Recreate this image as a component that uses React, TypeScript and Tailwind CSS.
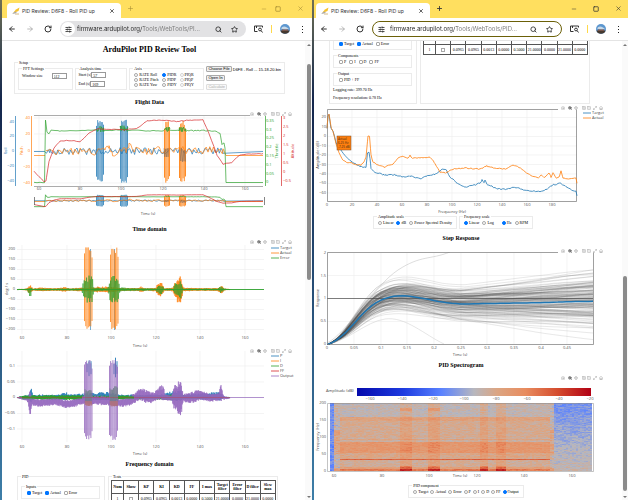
import type { ReactNode } from 'react';
import {
  ArrowLeft,
  ArrowRight,
  Camera,
  House,
  Maximize2,
  Minus,
  Move,
  Plus,
  RotateCw,
  Search,
  SlidersHorizontal,
  Square,
  SquareMinus,
  SquarePlus,
  Star,
  X,
  ZoomIn,
} from 'lucide-react';

type Point = [number, number];

const BLUE = '#1f77b4';
const ORANGE = '#ff7f0e';
const GREEN = '#2ca02c';
const RED = '#d62728';
const PURPLE = '#9467bd';

/* ---------- Data helpers ---------- */

const makeRandom = (seed: number) => {
  let s = seed;
  return () => {
    s = (s + 0x6d2b79f5) | 0;
    let t = Math.imul(s ^ (s >>> 15), 1 | s);
    t = (t + Math.imul(t ^ (t >>> 7), 61 | t)) ^ t;
    return ((t ^ (t >>> 14)) >>> 0) / 4294967296;
  };
};

const toPath = (points: Point[]) =>
  points.map(([x, y], i) => `${i ? 'L' : 'M'}${x.toFixed(1)} ${y.toFixed(1)}`).join('');

const lerpAt = (points: Point[], x: number) => {
  if (x <= points[0][0]) return points[0][1];
  for (let i = 1; i < points.length; i++) {
    const [x1, y1] = points[i];
    if (x <= x1) {
      const [x0, y0] = points[i - 1];
      return y0 + ((x - x0) / (x1 - x0 || 1)) * (y1 - y0);
    }
  }
  return points[points.length - 1][1];
};

// Adds small noise along a hand-placed curve
const jitter = (points: Point[], amp: number, seed: number, step = 1.5) => {
  const rnd = makeRandom(seed);
  const out: Point[] = [];
  const xs = new Set(points.map((p) => p[0]));
  for (let x = points[0][0]; x < points[points.length - 1][0]; x += step) xs.add(x);
  [...xs].sort((a, b) => a - b).forEach((x) => out.push([x, lerpAt(points, x) + (rnd() - 0.5) * amp]));
  return toPath(out);
};

// Signal that swings between a centre and an envelope
const swing = (centre: Point[], up: Point[], down: Point[], seed: number, step = 0.4) => {
  const rnd = makeRandom(seed);
  const out: Point[] = [];
  let side = 1;
  for (let x = centre[0][0]; x <= centre[centre.length - 1][0]; x += step) {
    const c = lerpAt(centre, x);
    const k = 0.55 + rnd() * 0.45;
    out.push([x, side > 0 ? c - lerpAt(up, x) * k : c + lerpAt(down, x) * k]);
    side = -side;
  }
  return toPath(out);
};

// Separate up and down strokes of a strong oscillation
const burst = (x0: number, x1: number, top: number, bottom: number, count: number, seed: number, slack = 4) => {
  const rnd = makeRandom(seed);
  const out: string[] = [];
  const step = (x1 - x0) / (count - 1);
  for (let i = 0; i < count; i++) {
    const edge = i === 0 || i === count - 1 ? slack : 0;
    out.push(`M${(x0 + i * step).toFixed(1)} ${(top + edge + rnd() * slack).toFixed(1)}V${(bottom - edge - rnd() * slack).toFixed(1)}`);
  }
  return out.join('');
};

/* ---------- Chart parts ---------- */

interface TickProps {
  items: [string, number][];
  at: number;
  axis: 'x' | 'y';
  anchor?: 'start' | 'middle' | 'end';
  fill?: string;
}

const Ticks = ({ items, at, axis, anchor = 'middle', fill = '#555' }: TickProps) => (
  <g fill={fill} textAnchor={anchor}>
    {items.map(([label, pos]) => (
      <text key={label} x={axis === 'x' ? pos : at} y={axis === 'x' ? at : pos + 1}>
        {label}
      </text>
    ))}
  </g>
);

const VLabel = ({ x, y, fill = '#444', children }: { x: number; y: number; fill?: string; children: ReactNode }) => (
  <text transform={`translate(${x} ${y}) rotate(-90)`} textAnchor="middle" fill={fill}>
    {children}
  </text>
);

const Grid = ({ xs, ys, box }: { xs: number[]; ys: number[]; box: [number, number, number, number] }) => (
  <path
    d={
      xs.map((x) => `M${x} ${box[1]}V${box[3]}`).join('') + ys.map((y) => `M${box[0]} ${y}H${box[2]}`).join('')
    }
    stroke="#ececec"
    strokeWidth="0.6"
    fill="none"
  />
);

const ModeBar = ({ x, y }: { x: number; y: number }) => {
  const icons = [
    { Icon: Camera, dx: 0 },
    { Icon: ZoomIn, dx: 7 },
    { Icon: Move, dx: 13 },
    { Icon: SquarePlus, dx: 21 },
    { Icon: SquareMinus, dx: 26 },
    { Icon: Maximize2, dx: 32 },
    { Icon: House, dx: 38 },
  ];
  return (
    <g>
      {icons.map(({ Icon, dx }, i) => (
        <Icon key={dx} x={x + dx} y={y} size={4} color={i === 1 ? '#555' : '#aaa'} strokeWidth={i === 1 ? 4 : 3} />
      ))}
    </g>
  );
};

const Legend = ({ x, y, items, step = 5 }: { x: number; y: number; items: [string, string][]; step?: number }) => (
  <g>
    {items.map(([label, color], i) => (
      <g key={label}>
        <path d={`M${x} ${y + i * step}h8`} stroke={color} strokeWidth="0.8" />
        <text x={x + 9} y={y + i * step + 1} fill="#444">
          {label}
        </text>
      </g>
    ))}
  </g>
);

const Chart = ({ viewBox, label, children }: { viewBox: string; label: string; children: ReactNode }) => (
  <svg
    viewBox={viewBox}
    role="img"
    aria-label={label}
    className="block w-full font-['Open_Sans',sans-serif] text-[4px]"
  >
    {children}
  </svg>
);

/* ---------- Flight data ---------- */

const rollPath =
  'M34 153.500L45 153.500' + jitter([[45, 153], [50, 154], [96, 153], [164, 153], [223, 153]], 7, 5, 1.6) + 'L263 153.500';
const pitchPath =
  'M34 157.500L45 157.500' +
  jitter([[46, 153], [96, 154], [105, 151], [109, 147], [112, 155], [126, 153], [129, 147], [136, 153], [180, 152], [223, 153]], 8, 21, 1.8) +
  'L226 157.500L263 157.500';
const throttlePath =
  jitter([[34, 184.5], [44.5, 184.5], [45.5, 122], [47, 134], [49, 136], [51, 132], [60, 133], [97, 132]], 0.6, 9, 3) +
  jitter([[97, 131], [104, 131]], 6, 10, 0.4) +
  jitter([[104, 132.5], [120, 132]], 1, 11, 2) +
  jitter([[120, 130.5], [128, 130.5]], 6, 12, 0.4) +
  jitter([[128, 132.5], [164, 133]], 1, 13, 2) +
  jitter([[164, 131.5], [170, 131.5]], 5, 14, 0.4) +
  jitter([[170, 132.5], [179, 132.5]], 1, 15, 2) +
  jitter([[179, 131.5], [186, 131.5]], 5, 16, 0.4) +
  jitter([[186, 133], [200, 132.5], [216, 133], [220, 136], [222, 146], [224, 145], [225, 150]], 1.6, 17, 1.5) +
  'L226 184.500L263 184.500';
const altitudePath = jitter(
  [[34, 173], [44, 184], [46, 183], [49, 163], [54, 150], [60, 143], [72, 142.5], [80, 143.5], [88, 136], [97, 131], [108, 131], [126, 132], [137, 130], [142, 127], [147, 122.5], [163, 122], [177, 123.5], [190, 122], [203, 122], [208, 133], [217, 157], [223, 166], [231, 165], [240, 157], [252, 156], [263, 155.5]],
  0.9,
  31,
  2.5,
);

const FlightLines = () => (
  <g fill="none" strokeWidth="0.7" strokeLinejoin="round">
    <path d={rollPath} stroke={BLUE} vectorEffect="non-scaling-stroke" />
    <path d={burst(96.5, 103.5, 121, 184, 7, 2) + burst(120.5, 127.5, 121, 185, 7, 3)} stroke={BLUE} strokeWidth="0.8" vectorEffect="non-scaling-stroke" />
    <path d={pitchPath} stroke={ORANGE} vectorEffect="non-scaling-stroke" />
    <path d={burst(164.5, 169.5, 123, 185, 5, 4) + burst(179.5, 185.5, 123, 184, 6, 6)} stroke={ORANGE} strokeWidth="0.9" vectorEffect="non-scaling-stroke" />
    <path d={swing([[164, 155], [169, 155]], [[164, 5]], [[164, 5]], 41, 0.8) + swing([[180, 157], [186, 157]], [[180, 7]], [[180, 8]], 42, 0.8)} stroke="#76665a" strokeWidth="0.5" vectorEffect="non-scaling-stroke" />
    <path d={throttlePath} stroke={GREEN} vectorEffect="non-scaling-stroke" />
    <path d={altitudePath} stroke={RED} vectorEffect="non-scaling-stroke" />
  </g>
);

const FlightChart = () => (
  <Chart viewBox="2 112 303 110" label="Flight data">
    <Grid xs={[39, 80, 121, 163, 204, 245]} ys={[120, 136, 153, 169, 185]} box={[34, 118, 263, 188]} />
    <path d="M34 117.5H250M34 188.5H263" stroke="#888" strokeWidth="0.7" />
    <path d="M15.5 118V188" stroke={BLUE} strokeWidth="0.7" />
    <path d="M31.5 118V188" stroke={ORANGE} strokeWidth="0.7" />
    <path d="M265.5 118V188" stroke={GREEN} strokeWidth="0.7" />
    <path d="M281.5 118V188" stroke={RED} strokeWidth="0.7" />
    <FlightLines />
    <g transform="translate(0 173.6) scale(1 0.19)">
      <FlightLines />
    </g>
    <path d="M34.5 199v8M264.5 199v8" stroke="#666" strokeWidth="0.8" />
    <Ticks axis="y" at={14} anchor="end" fill={BLUE} items={[['40', 124], ['20', 138], ['0', 153], ['−20', 168], ['−40', 183]]} />
    <Ticks axis="y" at={30} anchor="end" fill={ORANGE} items={[['40', 120], ['20', 136], ['0', 153], ['−20', 169], ['−40', 185]]} />
    <Ticks
      axis="y"
      at={266}
      anchor="start"
      fill={GREEN}
      items={[['0.35', 123], ['0.3', 132], ['0.25', 140], ['0.2', 149], ['0.15', 158], ['0.1', 167], ['0.05', 176], ['0', 184]]}
    />
    <Ticks
      axis="y"
      at={283}
      anchor="start"
      fill={RED}
      items={[['3', 120], ['2.5', 129], ['2', 138], ['1.5', 147], ['1', 156], ['0.5', 165], ['0', 174], ['−0.5', 183]]}
    />
    <Ticks axis="x" at={192} items={[['60', 39], ['80', 80], ['100', 121], ['120', 163], ['140', 204], ['160', 245]]} />
    <VLabel x={7} y={153} fill={BLUE}>Roll</VLabel>
    <VLabel x={23} y={153} fill={ORANGE}>Pitch</VLabel>
    <VLabel x={278} y={153} fill={GREEN}>Throttle</VLabel>
    <VLabel x={294} y={153} fill={RED}>Altitude</VLabel>
    <text x="148" y="217" textAnchor="middle" fill="#444">Time (s)</text>
    <ModeBar x={250} y={114} />
  </Chart>
);

/* ---------- Time domain ---------- */

const timeTicks: [string, number][] = [['60', 22], ['80', 67], ['100', 111], ['120', 156], ['140', 200], ['160', 245]];

const RateChart = () => {
  const centre: Point[] = [[17, 290.5], [230, 290.5]];
  const calm: Point[] = [[17, 0.3], [27, 1], [29, 4], [31, 4], [33, 1], [40, 2], [55, 1.2], [65, 2.5], [70, 1], [80, 2], [92, 2], [98, 3], [108, 3], [120, 1.5], [138, 1.5], [141, 3], [146, 1], [156, 2], [157, 5], [160, 8], [163, 6], [164, 1], [173, 2], [175, 8], [180, 14], [182, 8], [183, 2], [195, 1.5], [217, 1.5], [220, 3], [222, 4], [224, 1], [230, 0.6]];
  const calmDown: Point[] = calm.map(([x, y]) => [x, x === 180 ? 18 : y]);
  const green: Point[] = [[17, 0.2], [27, 1], [29, 2], [31, 3], [32, 1], [82, 1.2], [84, 14], [88, 14], [92, 14], [94, 2], [108, 1.5], [110, 12], [115, 15], [118, 14], [120, 2], [156, 1.2], [158, 4], [162, 5], [164, 1], [173, 1], [175, 6], [181, 9], [183, 1], [218, 1], [221, 4], [224, 1], [230, 0.5]];
  const greenDown: Point[] = green.map(([x, y]) => [x, x > 28 && x < 32 ? 7 : y]);
  return (
    <Chart viewBox="2 238 303 112" label="Time domain rates">
      <Grid xs={[22, 67, 111, 156, 200, 245]} ys={[250.5, 260.5, 270.5, 280.5, 290.5, 300.5, 310.5, 320.5, 330.5]} box={[17, 246, 264, 335]} />
      <g fill="none" strokeLinejoin="round">
        <path d="M90.500 250V331M114.500 250V331" stroke={BLUE} strokeWidth="0.6" />
        <path d={swing(centre, calm, calmDown, 52)} stroke={ORANGE} strokeWidth="0.7" />
        <path d={burst(84.5, 92, 248, 333, 7, 53, 6) + burst(110.5, 118, 248, 333, 7, 54, 6)} stroke={ORANGE} strokeWidth="0.8" />
        <path d={swing(centre, green, greenDown, 55, 0.6)} stroke={GREEN} strokeWidth="0.6" />
        <path d="M17 290.500H264" stroke={GREEN} strokeWidth="0.9" />
      </g>
      <Ticks axis="y" at={15} anchor="end" items={[['200', 250], ['150', 260], ['100', 270], ['50', 280], ['0', 290], ['−50', 300], ['−100', 310], ['−150', 320], ['−200', 330]]} />
      <Ticks axis="x" at={340} items={timeTicks} />
      <VLabel x={8} y={290}>deg / s</VLabel>
      <text x="140" y="348" textAnchor="middle" fill="#444">Time (s)</text>
      <Legend x={271} y={249} items={[['Target', BLUE], ['Actual', ORANGE], ['Error', GREEN]]} />
      <ModeBar x={250} y={241} />
    </Chart>
  );
};

const OutputChart = () => {
  const zero: Point[] = [[17, 398.5], [230, 398.5]];
  const purpleCentre: Point[] = [[17, 398.5], [27, 400], [30, 402], [40, 404], [55, 402], [66, 405], [75, 404], [83, 401], [94, 401], [108, 402], [122, 404], [132, 401], [140, 395], [150, 399], [160, 396], [168, 399], [190, 399], [200, 396], [210, 399], [218, 398], [221, 394], [224, 399], [230, 399]];
  const purpleAmp: Point[] = [[17, 0.3], [26, 2], [28, 3], [30, 12], [32, 4], [66, 4], [82, 4], [100, 5], [120, 4], [130, 5], [138, 6], [145, 7], [155, 5], [159, 8], [163, 12], [165, 3], [172, 3], [174, 12], [181, 20], [183, 4], [195, 6], [210, 4], [219, 4], [221, 9], [223, 2], [230, 0.5]];
  const purpleDown: Point[] = purpleAmp.map(([x, y]) => [x, x === 30 ? 22 : x > 155 && x < 164 ? 5 : y]);
  const blueAmp: Point[] = [[17, 0.3], [29, 3], [31, 10], [33, 3], [60, 3], [65, 6], [70, 3], [82, 4], [108, 6], [120, 3], [160, 3], [174, 7], [181, 7], [184, 3], [220, 6], [224, 1], [230, 0.4]];
  const greenAmp: Point[] = [[17, 0.2], [23, 2], [82, 2.5], [94, 2], [120, 2], [156, 2], [176, 3], [184, 2], [218, 1], [230, 0.3]];
  return (
    <Chart viewBox="2 350 303 107" label="Controller outputs">
      <Grid xs={[22, 67, 111, 156, 200, 245]} ys={[367, 383, 398.5, 414.5, 430]} box={[17, 352, 264, 443]} />
      <g fill="none" strokeLinejoin="round" strokeWidth="0.7">
        <path d={swing(zero, blueAmp, blueAmp.map(([x, y]) => [x, y / 2]), 60)} stroke={BLUE} />
        <path d={burst(87, 91, 358, 380, 3, 61) + burst(114, 117, 358, 380, 3, 62)} stroke={BLUE} strokeWidth="0.9" />
        <path d={swing(zero, greenAmp, greenAmp, 63)} stroke={GREEN} strokeWidth="0.9" />
        <path d={swing(purpleCentre, purpleAmp, purpleDown, 64, 0.3)} stroke={PURPLE} strokeWidth="0.6" />
        <path d={burst(84.5, 92, 360, 441, 8, 65, 5) + burst(109.5, 117.5, 361, 441, 8, 66, 5)} stroke={PURPLE} strokeWidth="0.8" />
        <path d={swing([[85, 398], [92, 398]], [[85, 8]], [[85, 6]], 67, 0.6) + swing([[110, 398], [118, 398]], [[110, 12]], [[110, 6]], 68, 0.6)} stroke="#71808a" />
        <path d={swing([[85, 403], [92, 403]], [[85, 1]], [[85, 4]], 70) + swing([[110, 403], [118, 403]], [[110, 1]], [[110, 5]], 71)} stroke="#b0727c" />
        <path d="M22 398.500H82M122 398.500H134" stroke={GREEN} strokeWidth="2" />
        <path d="M17 398.500H230" stroke={RED} strokeWidth="0.3" />
        <path d="M230 398.500H264" stroke={PURPLE} />
      </g>
      <Ticks axis="y" at={15} anchor="end" items={[['0.1', 367], ['0.05', 383], ['0', 398], ['−0.05', 414], ['−0.1', 430]]} />
      <Ticks axis="x" at={449} items={timeTicks} />
      <text x="140" y="456" textAnchor="middle" fill="#444">Time (s)</text>
      <Legend
        x={271}
        y={357}
        items={[['P', BLUE], ['I', ORANGE], ['D', GREEN], ['FF', RED], ['Output', PURPLE]]}
      />
      <ModeBar x={250} y={350} />
    </Chart>
  );
};

/* ---------- Frequency domain ---------- */

const actualSpectrum: Point[] = [[327, 128], [328, 116], [329, 114], [331, 127], [333, 131], [336, 144], [339, 153], [343, 160], [347, 163], [352, 163], [357, 165], [361, 165], [364, 162], [366, 157], [368, 136], [369.5, 136], [371, 155], [373, 162], [378, 165], [385, 167], [393, 164], [398, 158], [403, 156], [408, 158], [410, 155.5], [412, 158], [420, 158], [430, 157.5], [434, 162], [440, 172], [446, 173], [453, 169], [465, 168], [480, 169], [487, 166], [495, 168.5], [505, 169], [513, 165], [520, 168], [528, 174], [538, 178], [541, 175], [544, 178], [549, 173], [551, 177], [553, 173], [556, 178], [559, 177], [561, 171], [563, 178], [570, 179], [576, 178], [577, 183]];
const targetSpectrum: Point[] = [[327, 128], [328, 116], [329, 115], [331, 128], [333, 131], [336, 143], [340, 149], [346, 157], [352, 162], [360, 166], [366, 168], [367.5, 153], [369, 152], [370, 158], [371, 169], [375, 172], [385, 175], [395, 175], [402, 177], [410, 176], [421, 178.5], [427, 176], [436, 174], [442, 169], [446, 170], [450, 177], [458, 184], [466, 187], [475, 185], [480, 183], [482, 180], [484, 183], [485, 180], [487, 184], [497, 189], [508, 189], [514, 187], [525, 190], [540, 191.5], [547, 189], [553, 185], [560, 183], [566, 187], [572, 190], [576, 191], [577, 196]];

const SpectrumChart = () => (
  <Chart viewBox="314 104 308 110" label="Frequency domain">
    <Grid
      xs={[352, 377, 402, 427, 452, 477, 502, 527, 552]}
      ys={[117.5, 127, 136.5, 146, 155, 164.5, 174, 183.5, 193]}
      box={[327, 110, 577, 201]}
    />
    <path d="M558 109.5H327.5V201.5H576.5V109.5" fill="none" stroke="#777" strokeWidth="0.7" />
    <path d={jitter(targetSpectrum, 1.2, 80, 1.5)} fill="none" stroke={BLUE} strokeWidth="0.8" />
    <path d={jitter(actualSpectrum, 1, 81, 1.5)} fill="none" stroke={ORANGE} strokeWidth="0.8" />
    {/* Hover label */}
    <rect x="337" y="136" width="14" height="14" fill="#ff7f0e" stroke="#7a5230" strokeWidth="0.5" />
    <g fill="#3b2a1a" className="text-[3px]">
      <text x="338" y="140">Actual</text>
      <text x="338" y="144">6.25 Hz</text>
      <text x="338" y="148">-7.25 dB</text>
    </g>
    <Ticks axis="y" at={326} anchor="end" items={[['20', 117], ['10', 127], ['0', 136], ['−10', 146], ['−20', 155], ['−30', 165], ['−40', 174], ['−50', 183], ['−60', 193]]} />
    <Ticks
      axis="x"
      at={206}
      items={[['0', 327], ['20', 352], ['40', 377], ['60', 402], ['80', 427], ['100', 452], ['120', 477], ['140', 502], ['160', 527], ['180', 552]]}
    />
    <VLabel x={319} y={155}>Amplitude (dB)</VLabel>
    <text x="452" y="213" textAnchor="middle" fill="#444">Frequency (Hz)</text>
    <Legend x={583} y={113} items={[['Target', BLUE], ['Actual', ORANGE]]} />
    <ModeBar x={561} y={106} />
  </Chart>
);

/* ---------- Step response ---------- */

const stepBase: Point[] = [[0, 0], [0.01, 0.05], [0.02, 0.12], [0.035, 0.27], [0.05, 0.46], [0.065, 0.65], [0.08, 0.82], [0.095, 0.94], [0.11, 1.01], [0.125, 1.05], [0.14, 1.06], [0.155, 1.05], [0.17, 1.02], [0.19, 0.98], [0.21, 0.93], [0.23, 0.9], [0.25, 0.88], [0.3, 0.89], [0.35, 0.9], [0.4, 0.91], [0.45, 0.93], [0.5, 0.94]];

const stepToPath = (value: (t: number) => number) => {
  const out: Point[] = [];
  for (let i = 0; i <= 60; i++) {
    const t = (i / 60) * 0.4985;
    out.push([327.5 + t * 533, 344.5 - value(t) * 46]);
  }
  return toPath(out);
};

const stepCurves = (() => {
  const rnd = makeRandom(90);
  const gauss = () => (rnd() + rnd() + rnd() + rnd() - 2) * 1.1;
  return Array.from({ length: 130 }, () => {
    const gain = gauss() * 0.2;
    const drift = gauss() * 0.95 + gain * 0.5;
    const speed = 1 + gauss() * 0.1;
    const phase = rnd() * 6;
    return stepToPath(
      (t) => lerpAt(stepBase, t * speed) * (1 + gain) + drift * Math.max(0, t - 0.1) + Math.sin(t * 14 + phase) * 0.03 * Math.min(1, t * 8),
    );
  });
})();

const StepChart = () => (
  <Chart viewBox="314 246 308 111" label="Step response">
    <defs>
      <clipPath id="step-area">
        <rect x="327" y="252" width="266" height="93" />
      </clipPath>
    </defs>
    <Grid xs={[354, 381, 407, 434, 461, 487, 514, 541, 567]} ys={[275.5, 321.5]} box={[327, 253, 593, 344]} />
    <g clipPath="url(#step-area)" fill="none" strokeLinejoin="round">
      {stepCurves.map((d, i) => (
        <path key={i} d={d} stroke="#444" strokeOpacity="0.25" strokeWidth="0.5" />
      ))}
      <path d="M327 343C345 335 375 285 398 270S430 260 450 252" stroke="#bbb" strokeWidth="0.5" />
      <path d="M327 344C350 340 365 322 385 319S425 335 444 344" stroke="#ccc" strokeWidth="0.5" />
      <path d="M327 298.500H593" stroke="#444" strokeWidth="0.7" />
      <path d={stepToPath((t) => lerpAt(stepBase, t))} stroke={BLUE} strokeWidth="1.5" />
    </g>
    <path d="M558 252.5H327.5V344.5H593.5V252.5" fill="none" stroke="#777" strokeWidth="0.7" />
    <Ticks axis="y" at={326} anchor="end" items={[['2', 253], ['1.5', 276], ['1', 298], ['0.5', 321], ['0', 344]]} />
    <Ticks
      axis="x"
      at={349}
      items={[['0', 327], ['0.05', 354], ['0.1', 381], ['0.15', 407], ['0.2', 434], ['0.25', 461], ['0.3', 487], ['0.35', 514], ['0.4', 541], ['0.45', 567]]}
    />
    <VLabel x={319} y={298}>Response</VLabel>
    <text x="460" y="356" textAnchor="middle" fill="#444">Time (s)</text>
    <ModeBar x={561} y={249} />
  </Chart>
);

/* ---------- Spectrogram ---------- */

const scale: [number, number, number, number][] = [
  [0, 5, 10, 172],
  [0.2, 30, 60, 225],
  [0.36, 90, 130, 255],
  [0.5, 183, 183, 190],
  [0.6, 220, 165, 130],
  [0.72, 232, 140, 95],
  [0.86, 212, 75, 45],
  [1, 178, 0, 20],
];

const scaleColor = (v: number) => {
  const c = Math.min(1, Math.max(0, v));
  const i = Math.max(1, scale.findIndex((s) => s[0] >= c));
  const [p0, ...a] = scale[i - 1];
  const [p1, ...b] = scale[i];
  const k = (c - p0) / (p1 - p0);
  return `rgb(${a.map((n, j) => Math.round(n + (b[j] - n) * k)).join(',')})`;
};

const hotColumns: Point[] = [[399, 410], [427, 438], [479, 486], [495, 505]];

const spectrogramValue = (x: number, hz: number, noise: number) => {
  if (x > 553) return 0.4 + (1 - hz / 200) * 0.13 + noise * 0.08;
  if (x < 333) return 0.39 + noise * 0.1;
  const hot = hotColumns.some(([a, b]) => x >= a && x <= b);
  if (x < 339 || x > 548) {
    const v = hz > 50 && hz < 120 ? 0.61 : 0.53;
    return v + (hz < 8 ? 0.12 : 0) + noise * 0.12;
  }
  let v = 0.565;
  if (hz > 158) v = 0.52;
  else if (hz > 146) v = 0.62;
  else if (hz > 96) v = 0.575;
  else if (hz > 85) v = 0.55;
  else if (hz > 54) v = 0.67;
  else if (hz > 36) v = 0.59;
  if (hz > 91 && hz < 95) v = 0.62;
  if (hz > 31 && hz < 36) return 0.81 + noise * 0.05;
  if (hz < 5) v = 0.76;
  else if (hz < 12) v = 0.63;
  if (hot) v += hz < 16 ? 0.17 : hz > 176 && hz < 184 && x < 440 ? 0.14 : 0.05;
  return v + noise * 0.07;
};

const spectrogramCells = (() => {
  const rnd = makeRandom(7);
  const cells: { x: number; y: number; fill: string }[] = [];
  for (let y = 0; y < 68; y++) {
    const hz = 200 - (y + 0.5) * (200 / 68);
    let last = 0;
    for (let x = 330; x < 591; x += 2) {
      // Neighbouring cells in a row share part of their noise
      last = last * 0.35 + (rnd() - 0.5) * 0.95;
      cells.push({ x, y: 403 + y, fill: scaleColor(spectrogramValue(x, hz, last)) });
    }
  }
  return cells;
})();

const SpectrogramChart = () => (
  <Chart viewBox="314 373 308 110" label="PID spectrogram">
    <defs>
      <linearGradient id="amp-scale">
        {scale.map((s) => (
          <stop key={s[0]} offset={s[0]} stopColor={scaleColor(s[0])} />
        ))}
      </linearGradient>
    </defs>
    <rect x="357" y="388" width="234" height="8" fill="url(#amp-scale)" />
    <text x="326" y="392" fill="#444">Amplitude (dB)</text>
    <Ticks
      axis="x"
      at={400}
      items={[['−160', 370], ['−140', 402], ['−120', 433], ['−100', 464], ['−80', 496], ['−60', 527], ['−40', 559], ['−20', 590]]}
    />
    <g shapeRendering="crispEdges">
      {spectrogramCells.map((c) => (
        <rect key={`${c.x}-${c.y}`} x={c.x} y={c.y} width="2" height="1" fill={c.fill} />
      ))}
    </g>
    <path d="M327.5 403.5H593.5V471.5H327.5Z" fill="none" stroke="#888" strokeWidth="0.5" />
    <Ticks axis="y" at={326} anchor="end" items={[['200', 403], ['150', 420], ['100', 437], ['50', 454], ['0', 471]]} />
    <Ticks axis="x" at={477} items={[['60', 334], ['80', 382], ['100', 429], ['120', 477], ['140', 524], ['160', 572]]} />
    <VLabel x={319} y={437}>Frequency (Hz)</VLabel>
    <text x="460" y="477" textAnchor="middle" fill="#444">Time (s)</text>
    <ModeBar x={561} y={376} />
  </Chart>
);

/* ---------- Form parts ---------- */

const Heading = ({ children }: { children: ReactNode }) => (
  <h2 className="text-center text-[6px] leading-[16px] font-bold">{children}</h2>
);

const Group = ({ legend, className = '', children }: { legend: string; className?: string; children: ReactNode }) => (
  <fieldset className={`min-w-0 border border-[#ebebeb] ${className}`}>
    <legend className="ml-[3px] px-[1px] leading-[5px]">{legend}</legend>
    {children}
  </fieldset>
);

interface ChoiceProps {
  label: string;
  type?: 'radio' | 'checkbox';
  name?: string;
  checked?: boolean;
  dim?: boolean;
}

const Choice = ({ label, type = 'checkbox', name, checked = false, dim = false }: ChoiceProps) => (
  <label className="flex items-center gap-[1px] whitespace-nowrap leading-[5px]">
    <input
      type={type}
      name={name}
      defaultChecked={checked}
      className={`size-[4px] shrink-0 appearance-none border bg-white checked:border-[#0075ff] checked:bg-[#0075ff] ${
        type === 'radio' ? 'rounded-full' : 'rounded-[1px]'
      } ${dim ? 'border-[#d4d4d4]' : 'border-[#a8a8a8]'}`}
    />
    {label}
  </label>
);

const NumberField = ({ label, value, className = '' }: { label: string; value: string; className?: string }) => (
  <label className={`flex items-center leading-[6px] ${className}`}>
    {label}
    <input type="text" defaultValue={value} className="h-[6px] w-[15px] border border-[#999] bg-white px-[1px] leading-[4px]" />
  </label>
);

const SmallButton = ({ disabled = false, children }: { disabled?: boolean; children: ReactNode }) => (
  <button
    disabled={disabled}
    className={`rounded-[1px] border px-[1px] leading-[4px] ${
      disabled ? 'border-[#ddd] bg-[#f9f9f9] text-[#aaa]' : 'border-[#aaa] bg-[#efefef]'
    }`}
  >
    {children}
  </button>
);

const SetupForm = () => (
  <Group legend="Setup" className="mt-[2px] mr-[20px] ml-[12px] pb-[3px]">
    <div className="grid grid-cols-[58fr_56fr_80fr_71fr] gap-x-[2px] px-[3px] pt-[1px]">
      <Group legend="FFT Settings" className="h-[24px]">
        <NumberField label="Window size" value="512" className="justify-between pt-[2px] pr-[5px] pl-[3px]" />
      </Group>
      <Group legend="Analysis time" className="h-[24px]">
        <div className="flex flex-col items-start gap-[3px] pt-[1px] pl-[3px]">
          <NumberField label="Start (s)" value="57" />
          <NumberField label="End (s)" value="169" />
        </div>
      </Group>
      <Group legend="Axis" className="h-[24px]">
        <div className="grid grid-cols-[25fr_15fr_22fr] gap-x-[1px] pt-[1px] pl-[4px]">
          <Choice type="radio" name="axis" label="RATE Roll" />
          <Choice type="radio" name="axis" label="PIDR" checked />
          <Choice type="radio" name="axis" label="PIQR" dim />
          <Choice type="radio" name="axis" label="RATE Pitch" />
          <Choice type="radio" name="axis" label="PIDP" />
          <Choice type="radio" name="axis" label="PIQP" dim />
          <Choice type="radio" name="axis" label="RATE Yaw" />
          <Choice type="radio" name="axis" label="PIDY" />
          <Choice type="radio" name="axis" label="PIQY" dim />
        </div>
      </Group>
      <div className="flex flex-col items-start gap-[3px] font-['Liberation_Sans',sans-serif]">
        <div className="flex items-center gap-[1px] whitespace-nowrap">
          <SmallButton>Choose File</SmallButton>
          <span className="leading-[5px]">D6F8 - Roll ... 15-18-20.bin</span>
        </div>
        <SmallButton>Open In</SmallButton>
        <SmallButton disabled>Calculate</SmallButton>
      </div>
    </div>
  </Group>
);

const columns = ['Num', 'Show', 'KP', 'KI', 'KD', 'FF', 'I max', 'Target filter', 'Error filter', 'D filter', 'Slew max'];
const gains = ['0.0965', '0.0965', '0.0013', '0.0000', '0.5000', '21.0000', '0.0000', '21.0000', '0.0000'];

const PidForm = () => (
  <div className="mr-[27px] ml-[15px] grid grid-cols-[88fr_170fr] gap-x-[3px]">
    <Group legend="PID" className="h-[79px]">
      <div className="flex flex-col gap-[3px] pt-[5px] pr-[4px] pl-[3px]">
        <Group legend="Inputs" className="h-[15px]">
          <div className="flex gap-[3px] pt-px pl-[5px]">
            <Choice label="Target" checked />
            <Choice label="Actual" checked />
            <Choice label="Error" />
          </div>
        </Group>
        <Group legend="Components" className="h-[15px]">
          <div className="flex gap-[3px] pt-px pl-[5px]">
            {['P', 'I', 'D', 'FF'].map((c) => (
              <Choice key={c} label={c} />
            ))}
          </div>
        </Group>
        <Group legend="Output" className="h-[15px]">
          <div className="flex pt-px pl-[5px]">
            <Choice label="PID + FF" />
          </div>
        </Group>
      </div>
      <p className="pl-[3px] leading-[8px]">Logging rate: 399.70 Hz</p>
      <p className="pl-[3px] leading-[8px]">Frequency resolution: 0.78 Hz</p>
    </Group>
    <Group legend="Tests" className="h-[79px]">
      <table className="mt-[1px] ml-[2px] w-[165px] table-fixed border-collapse text-center">
        <thead>
          <tr className="h-[13px]">
            {columns.map((c) => (
              <th key={c} className="border border-[#555] p-0 leading-[4px] font-bold first:w-[12px]">
                {c}
              </th>
            ))}
          </tr>
        </thead>
        <tbody>
          <tr className="h-[10px]">
            <td className="border border-[#555] p-0 leading-[5px]">1</td>
            <td className="border border-[#555] p-0">
              <input type="checkbox" aria-label="Show" className="mx-auto block size-[4px] appearance-none border border-[#a8a8a8]" />
            </td>
            {gains.map((g, i) => (
              <td key={i} className="border border-[#555] p-0 leading-[5px]">
                {g}
              </td>
            ))}
          </tr>
        </tbody>
      </table>
    </Group>
  </div>
);

/* ---------- Browser shell ---------- */

interface BrowserWindowProps {
  active?: boolean;
  url: string;
  thumb: string;
  children: ReactNode;
}

const BrowserWindow = ({ active = false, url, thumb, children }: BrowserWindowProps) => (
  <section className="flex h-full min-w-0 flex-col overflow-hidden bg-white">
    {/* Tab strip */}
    <header className="flex h-[18px] shrink-0 items-end bg-[#ffdf5f] font-[Inter,sans-serif] text-[#333]">
      <div className={`flex h-[15px] w-[114px] items-center rounded-t-[4px] bg-white pl-[5px] ${active ? 'ml-[2px]' : 'ml-[5px]'}`}>
        <svg viewBox="0 0 8 8" className="mr-[2px] size-[8px] shrink-0" aria-hidden="true">
          <path d="M1 6L4 2.500L7.500 .5L6.500 4L4 5Z" fill="#f6c12c" />
          <path d="M0 7L3 4.500L5 5.500L3 6.500Z" fill="#a9a9a9" />
          <path d="M3 7h4" stroke="#c9a86a" strokeWidth="0.8" />
        </svg>
        <button className="text-left text-[5px] leading-[10px] whitespace-nowrap">PID Review: D6F8 - Roll PID up</button>
        <button aria-label="Close tab" className="ml-auto pr-[6px]">
          <X size={6} strokeWidth={3} />
        </button>
      </div>
      <button aria-label="New tab" className="mb-[6px] ml-[6px]">
        <Plus size={7} strokeWidth={active ? 3 : 2} className={active ? 'text-[#333]' : 'text-[#a88f35]'} />
      </button>
      <div className={`mb-[6px] ml-auto flex items-center ${active ? 'gap-[16px] pr-[6px] text-[#333]' : 'gap-[8px] pr-[8px] text-[#a88f35]'}`}>
        <button aria-label="Minimize"><Minus size={6} /></button>
        <button aria-label="Maximize"><Square size={6} strokeWidth={3} /></button>
        <button aria-label="Close window" className={active ? '' : 'ml-[8px]'}><X size={7} /></button>
      </div>
    </header>

    {/* Toolbar */}
    <nav className="flex h-[23px] shrink-0 items-center border-b border-[#e4e4e4] pl-px text-[#333]">
      <button aria-label="Back" className="flex w-[18px] justify-center"><ArrowLeft size={8} strokeWidth={3} /></button>
      <button aria-label="Forward" className="flex w-[18px] justify-center text-[#999]"><ArrowRight size={8} /></button>
      <button aria-label="Reload" className="flex w-[18px] justify-center"><RotateCw size={8} strokeWidth={3} /></button>
      <div
        className={`ml-[3px] flex h-[16px] min-w-0 flex-1 items-center rounded-full pr-[8px] pl-px ${
          active ? 'border border-[#6b6008] bg-white' : 'bg-[#e2e2e4]'
        }`}
      >
        <span className="flex size-[14px] shrink-0 items-center justify-center rounded-full bg-white">
          <SlidersHorizontal size={7} strokeWidth={3} />
        </span>
        <input
          type="text"
          aria-label="Address"
          defaultValue={url}
          className="ml-[2px] min-w-0 flex-1 bg-linear-to-r from-[#222] from-[67px] to-[#777] to-[67px] bg-clip-text font-[Inter,sans-serif] text-[6px] leading-[10px] text-transparent outline-none"
        />
        <span className="flex shrink-0 gap-[9px]">
          <Search size={7} strokeWidth={3} />
          <Star size={7} strokeWidth={3} />
        </span>
      </div>
      <div className="flex w-[66px] shrink-0 items-center pl-[8px]">
        <button aria-label="Search tabs">
          <svg viewBox="0 0 9 8" className="h-[8px] w-[9px]" fill="none" stroke="currentColor" aria-hidden="true">
            <path d="M3.500 6.500H.5V1H8.500V2.500M2.500 1V3" />
            <circle cx="6" cy="4.500" r="1.400" />
            <path d="M7 5.500L8.500 7.500" />
          </svg>
        </button>
        <span className="ml-[8px] h-[8px] w-px bg-[#ffd94a]" />
        <button aria-label="Profile" className="ml-[8px]">
          <svg viewBox="0 0 10 10" className="size-[10px]" aria-hidden="true">
            <circle cx="5" cy="5" r="5" fill="#5d97cf" />
            <path d="M1 4.500Q3 1 7 3.500L9 5Q5 6 1 4.500Z" fill="#c7d9e8" />
            <path d="M.3 6.500H9.700A5 5 0 0 1 .3 6.500Z" fill="#46392f" />
            <path d="M2 5.500H8V6.700H2Z" fill="#8a5038" />
          </svg>
        </button>
        <button aria-label="Menu" className="ml-[12px] flex flex-col gap-[2px]">
          <span className="size-[1px] bg-[#222]" />
          <span className="size-[1px] bg-[#222]" />
          <span className="size-[1px] bg-[#222]" />
        </button>
      </div>
    </nav>

    {/* Page and scrollbar */}
    <div className="flex min-h-0 flex-1">
      <main className="min-w-0 flex-1 overflow-hidden font-['Liberation_Serif',serif] text-[4px] text-black">{children}</main>
      <div className={`flex shrink-0 flex-col items-center bg-[#fafafa] pt-[3px] pb-[2px] ${active ? 'w-[6px]' : 'w-[7px]'}`}>
        <svg viewBox="0 0 4 2" className="h-[2px] w-[4px]" aria-hidden="true"><path d="M0 2L2 0L4 2Z" fill="#777" /></svg>
        <div className={`w-[4px] rounded-full bg-[#8b8b8b] ${thumb}`} />
        <svg viewBox="0 0 4 2" className="mt-auto h-[2px] w-[4px]" aria-hidden="true"><path d="M0 0L2 2L4 0Z" fill="#777" /></svg>
      </div>
    </div>
  </section>
);

export default function App() {
  return (
    <div className="grid h-screen grid-cols-[310fr_314fr] gap-x-[2px] overflow-hidden bg-linear-to-b from-[#6f6f52] via-[#14264c] via-20% to-[#3d7ea8] pl-[2px]">
      <BrowserWindow url="firmware.ardupilot.org/Tools/WebTools/PI..." thumb="mt-[18px] h-[216px]">
        <h1 className="pt-px pr-[8px] text-center text-[8px] leading-[16px] font-bold">ArduPilot PID Review Tool</h1>
        <SetupForm />
        <div className="pr-[8px]">
          <Heading>Flight Data</Heading>
        </div>
        <FlightChart />
        <div className="pt-px pr-[8px]">
          <Heading>Time domain</Heading>
        </div>
        <RateChart />
        <OutputChart />
        <div className="pr-[8px]">
          <Heading>Frequency domain</Heading>
        </div>
        <div className="pt-[2px]">
          <PidForm />
        </div>
      </BrowserWindow>

      <BrowserWindow active url="firmware.ardupilot.org/Tools/WebTools/PID..." thumb="mt-[230px] h-[215px]">
        {/* Scrolled so that only the lower part of the form shows */}
        <div className="-mt-[16px] pr-[5px]">
          <PidForm />
        </div>
        <SpectrumChart />
        <div className="flex justify-center gap-[2px] pr-[30px]">
          <Group legend="Amplitude scale" className="pb-[3px]">
            <div className="flex gap-[3px] px-[4px] pt-px">
              <Choice type="radio" name="amp" label="Linear" />
              <Choice type="radio" name="amp" label="dB" checked />
              <Choice type="radio" name="amp" label="Power Spectral Density" />
            </div>
          </Group>
          <Group legend="Frequency scale" className="pb-[3px]">
            <div className="flex gap-[3px] px-[4px] pt-px">
              <Choice type="radio" name="freq" label="Linear" checked />
              <Choice type="radio" name="freq" label="Log" />
              <span className="w-[2px]" />
              <Choice type="radio" name="unit" label="Hz" checked />
              <Choice type="radio" name="unit" label="RPM" />
            </div>
          </Group>
        </div>
        <div className="pt-px pr-[14px]">
          <Heading>Step Response</Heading>
        </div>
        <StepChart />
        <div className="pr-[14px]">
          <Heading>PID Spectrogram</Heading>
        </div>
        <SpectrogramChart />
        <div className="flex justify-center pr-[4px]">
          <Group legend="PID component" className="pb-[3px]">
            <div className="flex gap-[2px] px-[4px] pt-px">
              {['Target', 'Actual', 'Error', 'P', 'I', 'D', 'FF', 'Output'].map((c) => (
                <Choice key={c} type="radio" name="component" label={c} checked={c === 'Output'} />
              ))}
            </div>
          </Group>
        </div>
      </BrowserWindow>
    </div>
  );
}
